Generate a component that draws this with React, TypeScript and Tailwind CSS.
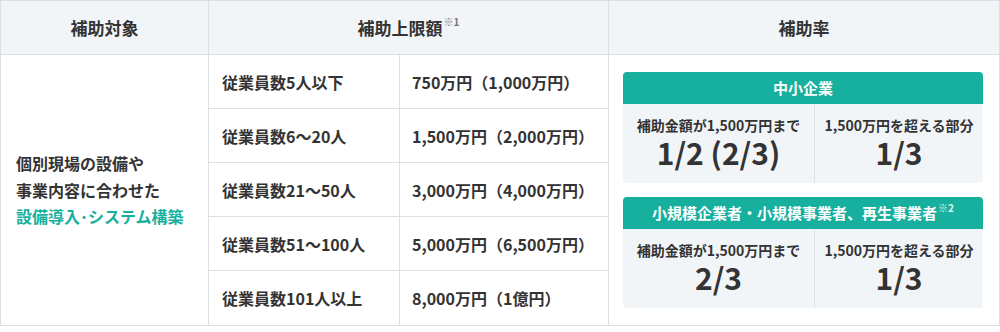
import React from 'react';

const rows = [
  { label: '従業員数5人以下', amount: '750万円（1,000万円）' },
  { label: '従業員数6〜20人', amount: '1,500万円（2,000万円）' },
  { label: '従業員数21〜50人', amount: '3,000万円（4,000万円）' },
  { label: '従業員数51〜100人', amount: '5,000万円（6,500万円）' },
  { label: '従業員数101人以上', amount: '8,000万円（1億円）' },
];

interface RatePanelProps {
  title: string;
  note?: string;
  left: string;
  right: string;
}

const RatePanel: React.FC<RatePanelProps> = ({ title, note, left, right }) => (
  <div className="w-[360px] rounded-[4px] overflow-hidden bg-[#f2f5f8]">
    <div className="h-8 flex items-center justify-center bg-[#17b09e] text-white text-[15px] font-bold">
      {title}
      {note && <sup className="text-[10px] font-bold ml-px -top-[5px] text-white/85">{note}</sup>}
    </div>
    <div className="grid grid-cols-[191px_1fr] h-[79px]">
      <div className="flex flex-col items-center pt-[11px]">
        <p className="text-[14px] leading-[20px] font-bold">補助金額が1,500万円まで</p>
        <p className="mt-px text-[30px] leading-[32px] font-bold">{left}</p>
      </div>
      <div className="flex flex-col items-center pt-[11px] border-l border-[#dde2e8]">
        <p className="text-[14px] leading-[20px] font-bold">1,500万円を超える部分</p>
        <p className="mt-px text-[30px] leading-[32px] font-bold">{right}</p>
      </div>
    </div>
  </div>
);

const App: React.FC = () => {
  return (
    <div className="w-[1000px] h-[332px] bg-white font-['Noto_Sans_CJK_JP','Noto_Sans',sans-serif] text-[#333]">
      <div className="border border-[#dcdfe4]">
        {/* header */}
        <div className="flex h-[54px] bg-[#f2f5f8] border-b border-[#dcdfe4] text-[17px] font-bold">
          <div className="w-[208px] flex items-center justify-center border-r border-[#dcdfe4]">補助対象</div>
          <div className="w-[400px] flex items-center justify-center border-r border-[#dcdfe4]">
            補助上限額<sup className="text-[10px] -top-[6px] text-[#777] ml-px">※1</sup>
          </div>
          <div className="flex-1 flex items-center justify-center">補助率</div>
        </div>

        {/* body */}
        <div className="flex">
          <div className="w-[208px] flex flex-col justify-center pl-[15px] border-r border-[#dcdfe4] text-[16px] leading-[26.5px] font-bold">
            <p>個別現場の設備や</p>
            <p>事業内容に合わせた</p>
            <p className="text-[#17b09e]">設備導入･システム構築</p>
          </div>

          <div className="w-[400px] flex flex-col border-r border-[#dcdfe4]">
            {rows.map((row, i) => (
              <div
                key={row.label}
                className={`flex h-[54px] text-[16px] font-bold ${i < rows.length - 1 ? 'border-b border-[#dcdfe4]' : 'h-[53px]'}`}
              >
                <div className="w-[191px] flex items-center px-[13px] border-r border-[#dcdfe4]">{row.label}</div>
                <div className="flex-1 flex items-center px-[12px]">{row.amount}</div>
              </div>
            ))}
          </div>

          <div className="flex-1 flex flex-col justify-center gap-[14px] pl-[14px]">
            <RatePanel title="中小企業" left="1/2 (2/3)" right="1/3" />
            <RatePanel title="小規模企業者・小規模事業者、再生事業者" note="※2" left="2/3" right="1/3" />
          </div>
        </div>
      </div>
    </div>
  );
};

export default App;
